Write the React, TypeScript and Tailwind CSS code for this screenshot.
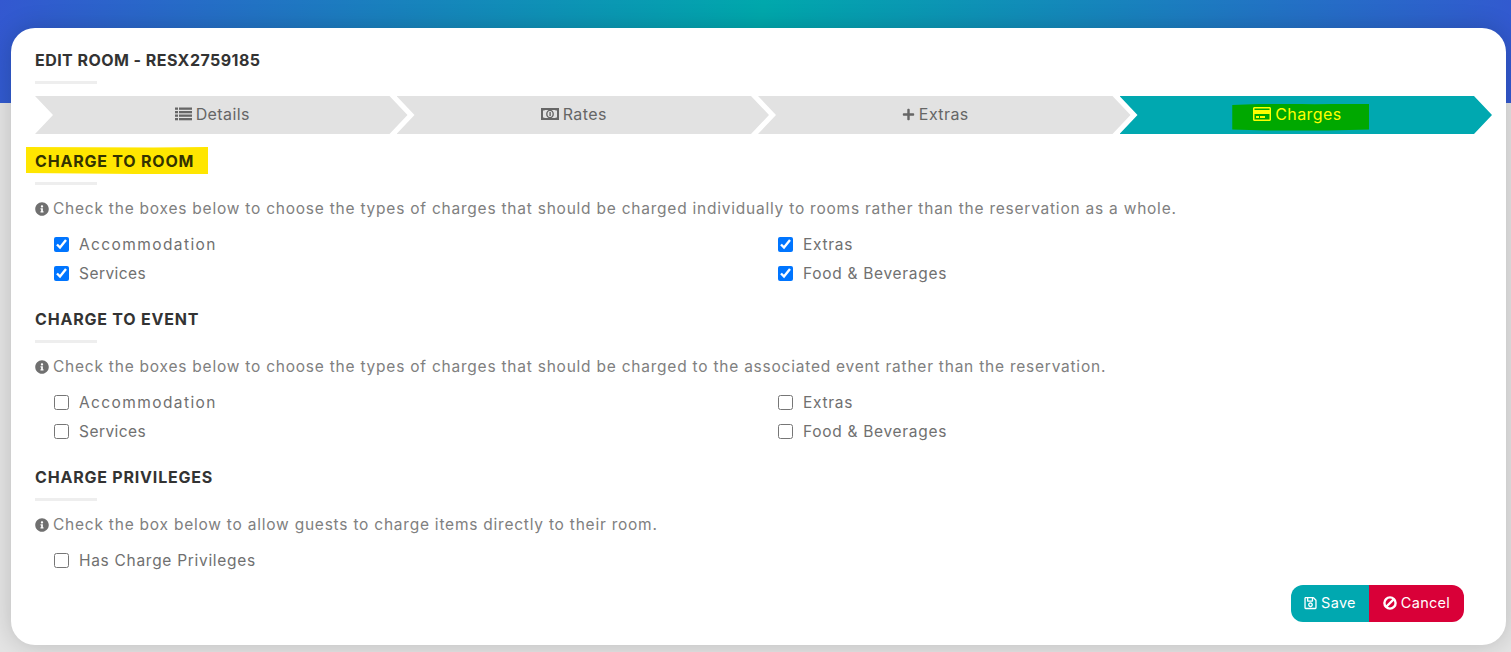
import React from 'react';
import { FaPlus, FaInfoCircle, FaRegSave, FaRegCreditCard } from 'react-icons/fa';

const font = { fontFamily: 'Inter, "Open Sans", sans-serif' };

const ListIcon = () => (
  <svg viewBox="0 0 17 14" className="h-[14px] w-[17px]" fill="currentColor">
    <rect x="0" y="0.5" width="3" height="2.3" />
    <rect x="4" y="0.5" width="13" height="2.3" />
    <rect x="0" y="4" width="3" height="2.3" />
    <rect x="4" y="4" width="13" height="2.3" />
    <rect x="0" y="7.5" width="3" height="2.3" />
    <rect x="4" y="7.5" width="13" height="2.3" />
    <rect x="0" y="11" width="3" height="2.3" />
    <rect x="4" y="11" width="13" height="2.3" />
  </svg>
);

const BillIcon = () => (
  <svg viewBox="0 0 18 12" className="h-[12px] w-[18px]">
    <path fill="currentColor" fillRule="evenodd" d="M0 0h18v12H0zM2 2.5v7a2.5 2.5 0 0 1 2 .5h10a2.5 2.5 0 0 1 2-.5v-7a2.5 2.5 0 0 1-2-.5H4a2.5 2.5 0 0 1-2 .5z" />
    <ellipse cx="9" cy="6" rx="3.2" ry="3.6" fill="none" stroke="currentColor" strokeWidth="1.4" />
    <rect x="8.4" y="4" width="1.4" height="4" fill="currentColor" />
  </svg>
);

const BanIcon = () => (
  <svg viewBox="0 0 14 14" className="h-[14px] w-[14px]" fill="none" stroke="currentColor" strokeWidth="2.4">
    <circle cx="7" cy="7" r="5.6" />
    <path d="M3 11 11 3" />
  </svg>
);

const Divider = () => <div className="h-[3px] w-[62px] bg-[#eeeeee]" />;

const Step = ({ icon, label, active, first }: { icon: React.ReactNode; label: string; active?: boolean; first?: boolean }) => (
  <div
    className={`flex h-[38px] flex-1 items-center justify-center pr-[18px] text-[16px] tracking-[0.4px] [clip-path:polygon(0_0,calc(100%_-_18px)_0,100%_50%,calc(100%_-_18px)_100%,0_100%,18px_50%)] ${
      first ? '' : '-ml-[11px]'
    } ${active ? 'bg-[#00a8b0] text-[#ffff00]' : 'bg-[#e2e2e2] text-[#666666]'}`}
  >
    {active ? (
      <span className="ml-[8px] mt-[4px] flex h-[27px] w-[137px] items-center gap-[4px] bg-[#00a800] pb-[6px] pl-[21px] [clip-path:polygon(0_6%,30%_0,60%_3%,100%_0,100%_96%,70%_100%,25%_100%,0_96%)]">
        {icon}
        {label}
      </span>
    ) : (
      <span className="flex items-center gap-[4px] pb-[2px]">
        {icon}
        {label}
      </span>
    )}
  </div>
);

const Section = ({ title, text, highlight, children }: { title: string; text: string; highlight?: boolean; children: React.ReactNode }) => (
  <section>
    <div className="flex h-[27px] items-center">
      {highlight ? (
        <h2 className="-ml-[9px] flex h-[27px] w-[182px] items-center bg-[#ffe600] pl-[9px] pt-[1px] text-[16px] font-bold tracking-[0.8px] text-[#333300] [clip-path:polygon(0_0,70%_2%,100%_0,100%_100%,60%_100%,0_96%)]">
          {title}
        </h2>
      ) : (
        <h2 className="pt-[1px] text-[16px] font-bold tracking-[0.8px] text-[#333333]">{title}</h2>
      )}
    </div>
    <div className="mt-[8px]">
      <Divider />
    </div>
    <p className="mt-[14px] flex h-[20px] items-center gap-[4px] whitespace-nowrap text-[15.5px] tracking-[0.77px] text-[#808080]">
      <FaInfoCircle className="h-[14px] w-[14px] text-[#707070]" />
      {text}
    </p>
    {children}
  </section>
);

const Check = ({ label, checked, tracking = 'tracking-[0.7px]' }: { label: string; checked?: boolean; tracking?: string }) => (
  <label className={`flex h-[29px] items-center gap-[10px] text-[15.5px] text-[#707070] ${tracking}`}>
    <input type="checkbox" defaultChecked={checked} className="h-[15px] w-[15px]" />
    {label}
  </label>
);

const Options = ({ checked }: { checked?: boolean }) => (
  <div className="mt-[11px] grid w-[1467px] grid-cols-2 pl-[19px]">
    <Check label="Accommodation" checked={checked} tracking="tracking-[1.4px]" />
    <Check label="Extras" checked={checked} />
    <Check label="Services" checked={checked} tracking="tracking-[0.45px]" />
    <Check label="Food & Beverages" checked={checked} />
  </div>
);

export default function App() {
  return (
    <div
      style={font}
      className="h-[652px] w-full overflow-hidden bg-[#e4e4e4] bg-[linear-gradient(100deg,#3358d0_0%,#00a8ac_50%,#3358d0_100%)] bg-[length:100%_103px] bg-no-repeat pl-[11px] pr-[5px] pt-[28px]"
    >
      <div className="h-[617px] rounded-[24px] bg-white px-[24px] shadow-[0_0_24px_rgba(0,0,0,0.18)]">
        <div className="flex h-[53px] items-end pb-[9px]">
          <h1 className="text-[16px] font-bold tracking-[0.45px] text-[#333333]">EDIT ROOM - RESX2759185</h1>
        </div>
        <Divider />
        <div className="mt-[12px] flex w-[1457px]">
          <Step first icon={<ListIcon />} label="Details" />
          <Step icon={<BillIcon />} label="Rates" />
          <Step icon={<FaPlus className="h-[13px] w-[13px]" />} label="Extras" />
          <Step active icon={<FaRegCreditCard className="h-[16px] w-[18px]" />} label="Charges" />
        </div>
        <div className="mt-[13px]">
          <Section highlight title="CHARGE TO ROOM" text="Check the boxes below to choose the types of charges that should be charged individually to rooms rather than the reservation as a whole.">
            <Options checked />
          </Section>
        </div>
        <div className="mt-[17px]">
          <Section title="CHARGE TO EVENT" text="Check the boxes below to choose the types of charges that should be charged to the associated event rather than the reservation.">
            <Options />
          </Section>
        </div>
        <div className="mt-[17px]">
          <Section title="CHARGE PRIVILEGES" text="Check the box below to allow guests to charge items directly to their room.">
            <div className="mt-[11px] pl-[19px]">
              <Check label="Has Charge Privileges" />
            </div>
          </Section>
        </div>
        <div className="mt-[10px] flex justify-end pr-[18px]">
          <button className="flex h-[37px] w-[78px] items-center justify-center gap-[4px] rounded-l-[12px] bg-[#00a8b0] pb-[1px] text-[14.5px] tracking-[0.3px] text-white">
            <FaRegSave className="h-[14px] w-[13px]" />
            Save
          </button>
          <button className="flex h-[37px] w-[95px] items-center justify-center gap-[4px] rounded-r-[12px] bg-[#d90038] pb-[1px] text-[14.5px] tracking-[0.3px] text-white">
            <BanIcon />
            Cancel
          </button>
        </div>
      </div>
    </div>
  );
}
